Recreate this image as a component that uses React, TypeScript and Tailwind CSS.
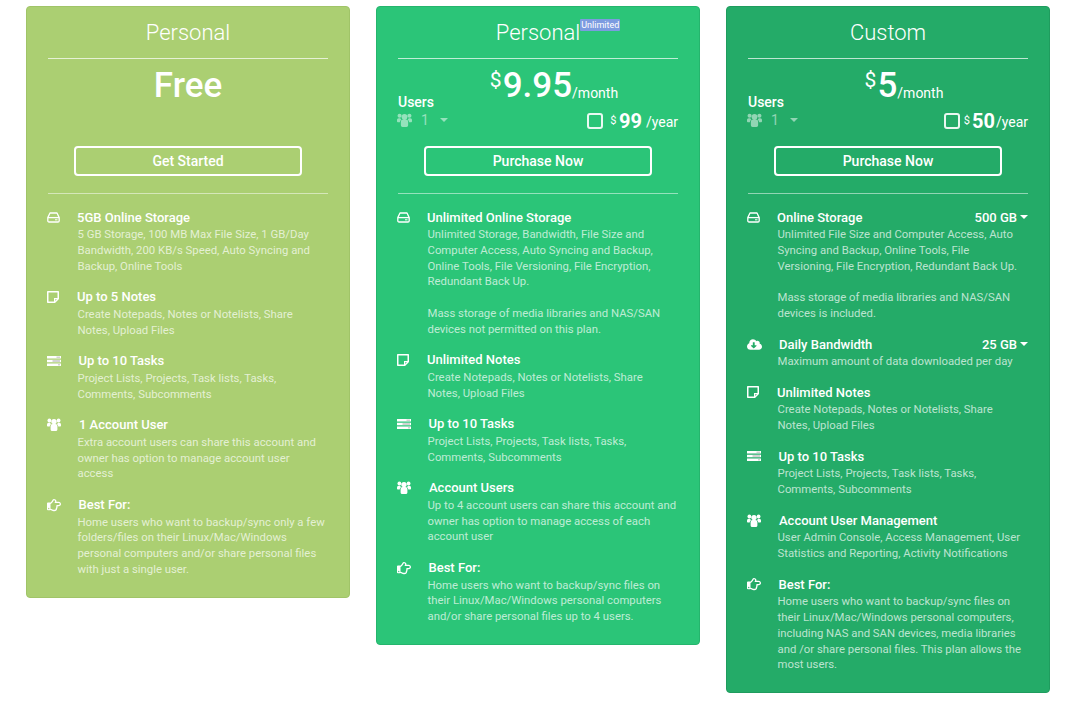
import React from "react";
import { FaRegHandPointRight, FaCloudDownloadAlt } from "react-icons/fa";

function HddIcon() {
  return (
    <svg width="13" height="11" viewBox="0 0 13 11" fill="none" stroke="currentColor" strokeWidth="1.3" className="ml-[-1px] block">
      <path d="M3 1h7l2.2 4.6v3.2a1.2 1.2 0 0 1-1.2 1.2H2a1.2 1.2 0 0 1-1.2-1.2V5.6z" strokeLinejoin="round" />
      <path d="M1 5.6h11" />
      <path d="M8 7.8h2.5" strokeWidth="1" />
    </svg>
  );
}

function NoteIcon() {
  return (
    <svg width="12" height="12" viewBox="0 0 12 12" fill="none" stroke="currentColor" strokeWidth="1.5" className="ml-[-1px] block">
      <path d="M.75.75h10.5v7l-3.5 3.5h-7z" strokeLinejoin="round" />
      <path d="M11 7.6H7.6V11" strokeWidth="1.2" />
    </svg>
  );
}

function TasksIcon() {
  return (
    <svg width="14" height="10" viewBox="0 0 14 10" fill="currentColor" className="ml-[-1px] block">
      <path d="M0 0h14v2.4H0zM0 3.8h14v2.4H0zM0 7.6h14V10H0z" />
      <path d="M9.5.8h3.5v.8H9.5zM5.5 4.6H13v.8H5.5zM11 8.4h2v.8h-2z" fill="#000" opacity="0.35" />
    </svg>
  );
}

function UsersIcon({ size = 14 }: { size?: number }) {
  return (
    <svg width={size} height={(size * 13) / 14} viewBox="0 0 14 13" fill="currentColor" className="ml-[-1px] block">
      <circle cx="7" cy="3.6" r="2.7" />
      <circle cx="2.4" cy="2.5" r="1.9" />
      <circle cx="11.6" cy="2.5" r="1.9" />
      <path d="M3.6 8a2 2 0 0 1 2-2h2.8a2 2 0 0 1 2 2v3.4a1.6 1.6 0 0 1-1.6 1.6H5.2a1.6 1.6 0 0 1-1.6-1.6z" />
      <path d="M0 6.4a1.6 1.6 0 0 1 1.6-1.6h1.5c.2.6.5 1 .9 1.4A3 3 0 0 0 2.7 8.6H.8a.8.8 0 0 1-.8-.8z" />
      <path d="M14 6.4a1.6 1.6 0 0 0-1.6-1.6h-1.5c-.2.6-.5 1-.9 1.4a3 3 0 0 1 1.3 2.4h1.9a.8.8 0 0 0 .8-.8z" />
    </svg>
  );
}

type Feature = { icon: React.ReactNode; title: string; indent: string; value?: string; desc: string[] };

const hdd = <HddIcon />;
const note = <NoteIcon />;
const tasks = <TasksIcon />;
const users = <UsersIcon />;
const hand = <FaRegHandPointRight className="ml-[-1px] text-[14px]" />;
const cloud = <FaCloudDownloadAlt className="ml-[-1px] text-[15px]" />;

function Caret({ className }: { className: string }) {
  return <span className={`inline-block h-0 w-0 border-x-[4px] border-t-[4px] border-x-transparent ${className}`} />;
}

function Row({ f }: { f: Feature }) {
  return (
    <div className="flex">
      <div className="flex h-[17px] w-[29px] shrink-0 items-center">{f.icon}</div>
      <div className="min-w-0 flex-1">
        <div className={`flex h-[18.5px] items-center justify-between pb-[1.5px] text-[13px] font-[475] leading-[17px] ${f.indent}`}>
          <span>{f.title}</span>
          {f.value && (
            <span className="flex items-center gap-[3px]">
              {f.value}
              <Caret className="border-t-white" />
            </span>
          )}
        </div>
        {f.desc.map((l, i) => (
          <div key={i} className="h-[15.75px] whitespace-pre pl-[0.5px] text-[11.35px] leading-[15.75px] text-white/70">
            {l}
          </div>
        ))}
      </div>
    </div>
  );
}

function UsersPicker() {
  return (
    <div className="pt-[34px]">
      <div className="text-[14px] font-[475] leading-[18px]">Users</div>
      <div className="flex h-[18px] items-center text-white/50">
        <UsersIcon size={15} />
        <span className="ml-[9px] text-[14px]">1</span>
        <Caret className="ml-[11px] border-t-white/50" />
      </div>
    </div>
  );
}

function Card({
  bg,
  title,
  badge,
  price,
  button,
  features,
}: {
  bg: string;
  title: string;
  badge?: boolean;
  price: React.ReactNode;
  button: string;
  features: Feature[];
}) {
  return (
    <div className={`w-[324px] rounded-[4px] border px-[21px] pb-[19px] text-white ${bg}`}>
      <div className="flex h-[52px] items-center justify-center border-b border-white/70 pb-[1px] text-center text-[22px] font-light">
        <span className="relative">
          {title}
          {badge && (
            <span className="absolute top-[3px] left-[100%] rounded-[1px] bg-[#7c9be0] px-[1px] text-[9px] leading-[12px] font-normal whitespace-nowrap">
              Unlimited
            </span>
          )}
        </span>
      </div>
      <div className="h-[87px]">{price}</div>
      <div className="flex justify-center">
        <div className="flex h-[30px] w-[228px] items-center justify-center rounded-[4px] border-2 border-white text-[14px] font-[475]">
          {button}
        </div>
      </div>
      <div className="mt-[17px] mb-[14.5px] border-b border-white/50" />
      <div className="flex flex-col gap-[14px]">
        {features.map((f, i) => (
          <Row key={i} f={f} />
        ))}
      </div>
    </div>
  );
}

function Paid({ main, year, custom }: { main: string; year: string; custom?: boolean }) {
  return (
    <div className="grid h-full">
      <div className="col-start-1 row-start-1 flex h-[47px] items-start justify-center pt-[7px] pl-[32px]">
        <span className="mt-[2px] mr-[1px] text-[21px] leading-[24px]">$</span>
        <span className="text-[35px] leading-[40px] font-medium">{main}</span>
        <span className="mt-[17px] text-[14px] leading-[20px]">/month</span>
      </div>
      <div className="col-start-1 row-start-1 flex items-start justify-between">
        <UsersPicker />
        <div className="mt-[50px] flex items-center">
          <span className={`h-[16px] w-[16px] rounded-[3px] border-2 border-white/90 ${custom ? "mr-[4px]" : "mr-[7.5px]"}`} />
          <span className={`text-[11px] ${custom ? "mr-[2px]" : "mr-[2.5px]"}`}>$</span>
          <span className="text-[20px] leading-[24px] font-bold">{year}</span>
          <span className={`mt-[2px] text-[14px] ${custom ? "ml-[1px]" : "ml-[4px]"}`}>/year</span>
        </div>
      </div>
    </div>
  );
}

const storageDesc1 = ["5 GB Storage, 100 MB Max File Size, 1 GB/Day", "Bandwidth, 200 KB/s Speed, Auto Syncing and", "Backup, Online Tools"];
const notesDesc = ["Create Notepads, Notes or Notelists, Share", "Notes, Upload Files"];
const tasksDesc = ["Project Lists, Projects, Task lists, Tasks,", "Comments, Subcomments"];

const free: Feature[] = [
  { icon: hdd, title: "5GB Online Storage", indent: "", desc: storageDesc1 },
  { icon: note, title: "Up to 5 Notes", indent: "", desc: notesDesc },
  { icon: tasks, title: "Up to 10 Tasks", indent: "pl-[1.5px]", desc: tasksDesc },
  {
    icon: users,
    title: "1 Account User",
    indent: "pl-[2px]",
    desc: ["Extra account users can share this account and", "owner has option to manage account user", "access"],
  },
  {
    icon: hand,
    title: "Best For:",
    indent: "pl-[1.5px]",
    desc: ["Home users who want to backup/sync only a few", "folders/files on their Linux/Mac/Windows", "personal computers and/or share personal files", "with just a single user."],
  },
];

const personal: Feature[] = [
  {
    icon: hdd,
    title: "Unlimited Online Storage",
    indent: "",
    desc: ["Unlimited Storage, Bandwidth, File Size and", "Computer Access, Auto Syncing and Backup,", "Online Tools, File Versioning, File Encryption,", "Redundant Back Up.", " ", "Mass storage of media libraries and NAS/SAN", "devices not permitted on this plan."],
  },
  { icon: note, title: "Unlimited Notes", indent: "", desc: notesDesc },
  { icon: tasks, title: "Up to 10 Tasks", indent: "pl-[1.5px]", desc: tasksDesc },
  {
    icon: users,
    title: "Account Users",
    indent: "pl-[2px]",
    desc: ["Up to 4 account users can share this account and", "owner has option to manage access of each", "account user"],
  },
  {
    icon: hand,
    title: "Best For:",
    indent: "pl-[1.5px]",
    desc: ["Home users who want to backup/sync files on", "their Linux/Mac/Windows personal computers", "and/or share personal files up to 4 users."],
  },
];

const custom: Feature[] = [
  {
    icon: hdd,
    title: "Online Storage",
    indent: "",
    value: "500 GB",
    desc: ["Unlimited File Size and Computer Access, Auto", "Syncing and Backup, Online Tools, File", "Versioning, File Encryption, Redundant Back Up.", " ", "Mass storage of media libraries and NAS/SAN", "devices is included."],
  },
  { icon: cloud, title: "Daily Bandwidth", indent: "pl-[2px]", value: "25 GB", desc: ["Maximum amount of data downloaded per day"] },
  { icon: note, title: "Unlimited Notes", indent: "", desc: notesDesc },
  { icon: tasks, title: "Up to 10 Tasks", indent: "pl-[1.5px]", desc: tasksDesc },
  {
    icon: users,
    title: "Account User Management",
    indent: "pl-[2px]",
    desc: ["User Admin Console, Access Management, User", "Statistics and Reporting, Activity Notifications"],
  },
  {
    icon: hand,
    title: "Best For:",
    indent: "pl-[1.5px]",
    desc: ["Home users who want to backup/sync files on", "their Linux/Mac/Windows personal computers,", "including NAS and SAN devices, media libraries", "and /or share personal files. This plan allows the", "most users."],
  },
];

export default function App() {
  return (
    <div className="flex min-h-[703px] items-start gap-[26px] bg-white pt-[6px] pl-[26px] font-['Roboto',sans-serif]">
      <Card
        bg="bg-[#abcf72] border-[#a0c468]"
        title="Personal"
        button="Get Started"
        price={<div className="pt-[7px] text-center text-[35px] leading-[40px] font-medium">Free</div>}
        features={free}
      />
      <Card
        bg="bg-[#2bc578] border-[#25b56d]"
        title="Personal"
        badge
        button="Purchase Now"
        price={<Paid main="9.95" year="99" />}
        features={personal}
      />
      <Card
        bg="bg-[#24ab68] border-[#1f9c5e]"
        title="Custom"
        button="Purchase Now"
        price={<Paid main="5" year="50" custom />}
        features={custom}
      />
    </div>
  );
}
